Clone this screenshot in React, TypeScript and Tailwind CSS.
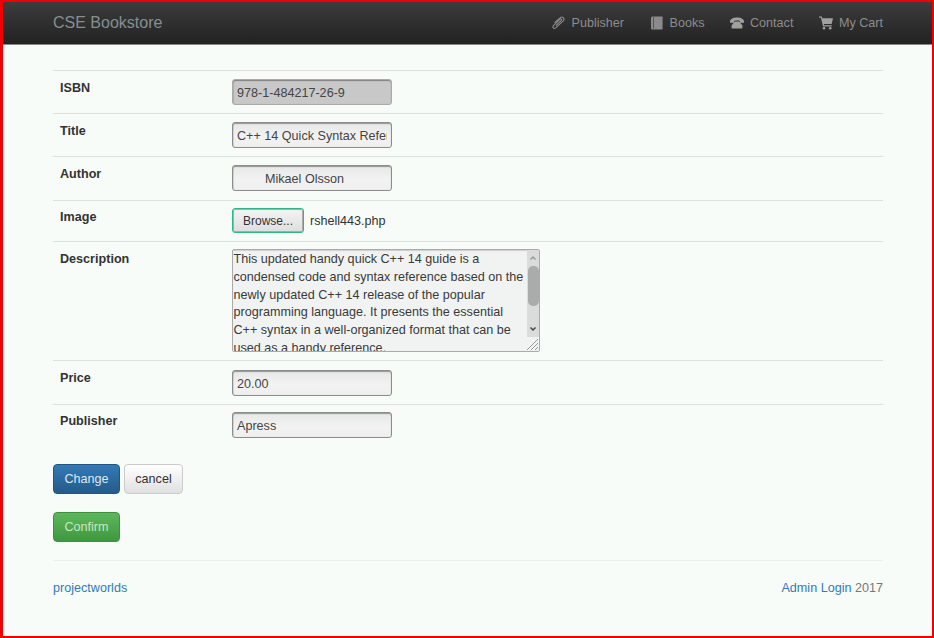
import React from "react";

const inputCls =
  "block w-[160px] h-[26px] pl-1 pt-[2px] text-[12.6px] text-[#444] rounded-[3px] border border-[#8c8c8c] bg-[linear-gradient(#e6e8e7,#f1f2f1_55%,#eeefee)] shadow-[inset_0_1px_1px_rgba(0,0,0,0.35),inset_1px_0_1px_rgba(0,0,0,0.1)] outline-none font-['Liberation_Sans',sans-serif]";

const Nav = ({ icon, label }: { icon: React.ReactNode; label: string }) => (
  <a className="flex items-center gap-[6px] text-[#8c8c8c] text-[12.6px]">
    <span className="w-[14px] h-[14px] block">{icon}</span>
    {label}
  </a>
);

const Row = ({ label, children, cls, lcls }: { label: string; children: React.ReactNode; cls?: string; lcls?: string }) => (
  <div className={"flex border-t border-[#dde2df] " + (cls ?? "")}>
    <div className={"w-[179px] pl-[7px] font-bold text-[12.6px] leading-[18px] text-[#333] " + (lcls ?? "pt-[8px]")}>{label}</div>
    <div className="flex-1">{children}</div>
  </div>
);

const Clip = (
  <svg viewBox="0 0 14 14" className="w-full h-full" fill="none" stroke="#8a8a8a" strokeWidth="1.1">
    <path d="M5 9.6 10.2 4.3c.8-.9-.4-2.1-1.3-1.2L2.4 9.6c-1.6 1.7.6 3.7 2.3 2.2L12.2 4.8c2-2.1-1-5-3.1-3L3.6 6.6" />
  </svg>
);
const Book = (
  <svg viewBox="0 0 14 14" className="w-full h-full" fill="#8a8a8a">
    <path d="M1 2.2C1 1 1.8.4 2.8.4H12.6v12.2c0 .6-.4 1-1 1H2.8c-1 0-1.8-.7-1.8-1.6Z" />
    <path d="M3 1.2h.8v11.4H3z" fill="#4a4a4a" />
  </svg>
);
const Phone = (
  <svg viewBox="0 0 14 14" className="w-full h-full" fill="#a0a0a0">
    <path d="M0 5C1 2 4 1.4 7 1.4S13 2 14 5v1.8H10V5C9 4.2 5 4.2 4 5v1.8H0Z" />
    <path d="M4.6 5.6h4.8L12.4 9.4V12.6H1.6V9.4Z" />
  </svg>
);
const Cart = (
  <svg viewBox="0 0 14 14" className="w-full h-full" fill="#a0a0a0">
    <path d="M0 .6h2.8l.5 1.6H14L12.6 8H4.8l.3 1.3h7.7v1.1H4L2 1.7H0Z" />
    <circle cx="5" cy="12.2" r="1.3" />
    <circle cx="11.2" cy="12.2" r="1.3" />
  </svg>
);

export default function App() {
  return (
    <div className="w-[934px] h-[638px] border-2 border-l-[3px] border-[#f00000] bg-[#f8fcf9] font-['Liberation_Sans',sans-serif] text-[12.6px] text-[#333] overflow-hidden">
      <nav className="h-[43px] bg-[linear-gradient(#3c3c3c,#222)] border-b border-[#888] flex items-center justify-between pl-[50px] pr-[49px]">
        <span className="text-[#858f90] text-[16px]">CSE Bookstore</span>
        <div className="flex gap-[25.5px]">
          <Nav icon={Clip} label="Publisher" />
          <Nav icon={Book} label="Books" />
          <Nav icon={Phone} label="Contact" />
          <Nav icon={Cart} label="My Cart" />
        </div>
      </nav>

      <main className="ml-[50px] mr-[49px] mt-[25px]">
        <Row label="ISBN" cls="h-[43px]">
          <div className="pt-[8px]">
            <input readOnly value="978-1-484217-26-9" className={inputCls + " bg-none bg-[#c8c8c8] border-[#aaa]"} />
          </div>
        </Row>
        <Row label="Title" cls="h-[43px]">
          <div className="pt-[8px]">
            <input readOnly value="C++ 14 Quick Syntax Reference" className={inputCls + " pr-[4px] text-[12.3px]"} />
          </div>
        </Row>
        <Row label="Author" cls="h-[44px]">
          <div className="pt-[8px]">
            <input readOnly value="        Mikael Olsson" className={inputCls} />
          </div>
        </Row>
        <Row label="Image" cls="h-[41px]" lcls="pt-[7px]">
          <div className="pt-[7px] flex items-center gap-[6px]">
            <span className="flex items-center justify-center w-[72px] h-[25px] pt-[1px] rounded-[3px] border border-[#2fb78c] bg-[linear-gradient(#f4f4f4,#dedede)] text-[12px] text-[#333] shadow-[inset_0_0_0_1px_#aaa]">
              Browse...
            </span>
            <span className="text-[12.6px] pt-[1px]">rshell443.php</span>
          </div>
        </Row>
        <Row label="Description" cls="h-[119px]">
          <div className="pt-[7px]">
            <div className="relative flex w-[308px] h-[103px] rounded-[2px] border border-[#aaa] bg-[#f0f3f2] shadow-[inset_0_1px_1px_rgba(0,0,0,0.15)] overflow-hidden">
              <div className="w-[294px] pl-[0.5px] pt-[1px] text-[12.6px] leading-[17.8px] text-[#3a3a3a] overflow-hidden">
                This updated handy quick C++ 14 guide is a condensed code and syntax reference based on the newly updated C++ 14 release of the popular programming language. It presents the essential C++ syntax in a well-organized format that can be used as a handy reference.
              </div>
              <div className="w-[12px] flex flex-col items-center bg-[#d9dcdb]">
                <svg viewBox="0 0 12 12" className="w-[12px] h-[16px] shrink-0" fill="none" stroke="#999" strokeWidth="1.5">
                  <path d="M3.5 7.5 6 5l2.5 2.5" />
                </svg>
                <div className="w-[11px] h-[40px] rounded-[5px] bg-[#a9acab]" />
                <div className="flex-1" />
                <svg viewBox="0 0 12 12" className="w-[12px] h-[15px] shrink-0 mb-[15px]" fill="none" stroke="#444" strokeWidth="1.5">
                  <path d="M3.5 5 6 7.5 8.5 5" />
                </svg>
              </div>
              <svg viewBox="0 0 14 14" className="absolute right-0 bottom-0 w-[14px] h-[14px] bg-[#f0f3f2]" stroke="#999" strokeWidth="1">
                <path d="M13 2 2 13M13 6 6 13M13 10l-3 3" />
              </svg>
            </div>
          </div>
        </Row>
        <Row label="Price" cls="h-[44px]">
          <div className="pt-[9px]">
            <input readOnly value="20.00" className={inputCls} />
          </div>
        </Row>
        <Row label="Publisher" cls="h-[44px]" lcls="pt-[7px]">
          <div className="pt-[7px]">
            <input readOnly value="Apress" className={inputCls} />
          </div>
        </Row>

        <div className="flex gap-[4px] mt-[16px]">
          <button className="w-[67px] h-[30px] pt-[1px] rounded-[4px] border border-[#245580] bg-[linear-gradient(#337ab7,#265a88)] text-[#dfe8f0] text-[12.6px]">Change</button>
          <button className="w-[59px] h-[30px] pt-[1px] rounded-[4px] border border-[#ccc] bg-[linear-gradient(#fff,#e0e0e0)] text-[#333] text-[12.6px]">cancel</button>
        </div>
        <button className="block mt-[18px] w-[67px] h-[30px] pt-[1px] rounded-[4px] border border-[#3e8f3e] bg-[linear-gradient(#5cb85c,#419641)] text-[#c5e8c5] text-[12.6px]">Confirm</button>

        <div className="mt-[18px] border-t border-[#eef0ef] pt-[18px] flex justify-between text-[12.6px] leading-[18px]">
          <a className="text-[#337ab7]">projectworlds</a>
          <span className="text-[#777]">
            <a className="text-[#337ab7]">Admin Login</a> 2017
          </span>
        </div>
      </main>
    </div>
  );
}
